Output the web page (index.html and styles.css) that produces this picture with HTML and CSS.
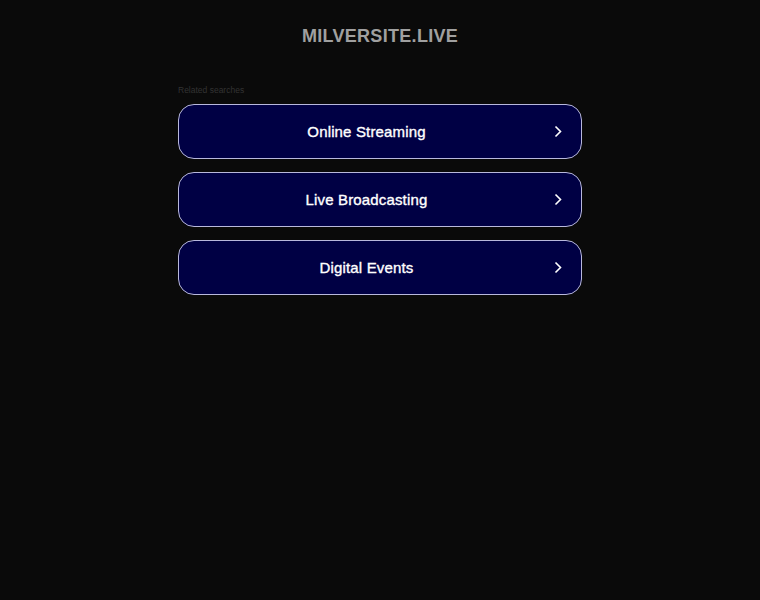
FILE: index.html
```html
<!DOCTYPE html>
<html lang="en">
<head>
    <meta charset="UTF-8">
    <title>milversite.live</title>
    <link rel="stylesheet" href="styles.css">
</head>
<body>
<div class="header">
    <h1 class="domain">MILVERSITE.LIVE</h1>
</div>
<div class="content">
    <p class="related">Related searches</p>
    <a class="link" href="#">
        <span class="label">Online Streaming</span>
        <svg class="chev" width="8" height="13" viewBox="0 0 8 13"><path d="M1.5 1.5 L6.5 6.5 L1.5 11.5" fill="none" stroke="#fff" stroke-width="1.6"/></svg>
    </a>
    <a class="link" href="#">
        <span class="label">Live Broadcasting</span>
        <svg class="chev" width="8" height="13" viewBox="0 0 8 13"><path d="M1.5 1.5 L6.5 6.5 L1.5 11.5" fill="none" stroke="#fff" stroke-width="1.6"/></svg>
    </a>
    <a class="link" href="#">
        <span class="label">Digital Events</span>
        <svg class="chev" width="8" height="13" viewBox="0 0 8 13"><path d="M1.5 1.5 L6.5 6.5 L1.5 11.5" fill="none" stroke="#fff" stroke-width="1.6"/></svg>
    </a>
</div>
</body>
</html>
```

FILE: styles.css
```css
body {
    margin: 0;
    background: #0a0a0a;
    font-family: "Liberation Sans", Arial, sans-serif;
}
.header {
    padding-top: 26px;
    text-align: center;
}
.domain {
    margin: 0;
    font-size: 18px;
    line-height: 20px;
    font-weight: bold;
    letter-spacing: 0.3px;
    color: #a0a0a0;
}
.content {
    width: 404px;
    margin: 0 auto;
    padding-top: 38px;
}
.related {
    margin: 0 0 8px 0;
    font-size: 8.5px;
    line-height: 12px;
    color: #333;
}
.link {
    display: flex;
    align-items: center;
    height: 53px;
    margin-bottom: 13px;
    padding-right: 19px;
    border: 1px solid #b8b8dc;
    border-radius: 16px;
    background: #000044;
    color: #fff;
    text-decoration: none;
}
.label {
    flex: 1;
    text-align: center;
    font-size: 15px;
    letter-spacing: 0.15px;
    -webkit-text-stroke: 0.35px #fff;
}
.chev {
    display: block;
}
```
